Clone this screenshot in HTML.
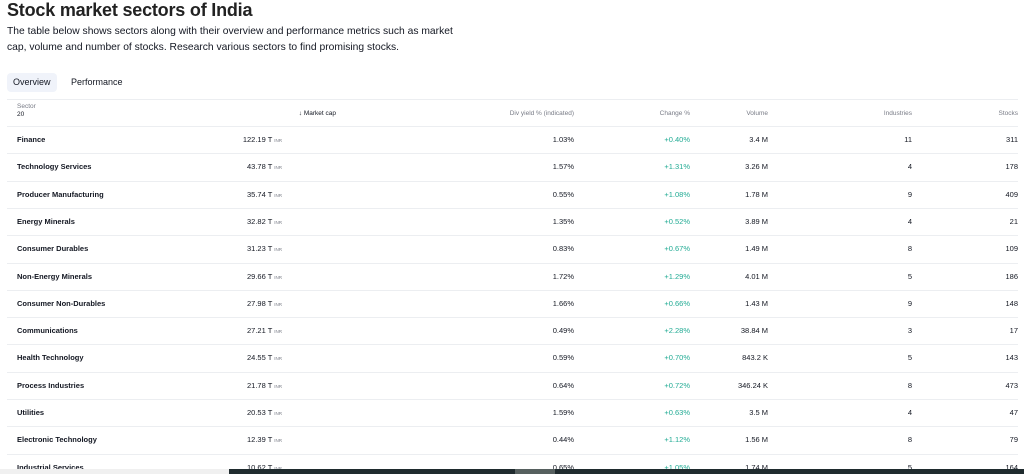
<!DOCTYPE html>
<html><head><style>
body{margin:0;width:1024px;height:474px;overflow:hidden;background:#fff;font-family:"Liberation Sans",sans-serif;color:#131722;position:relative}
h1{position:absolute;left:7px;top:1px;margin:0;font-size:18px;line-height:18px;font-weight:bold;letter-spacing:-0.2px;color:#222}
.d{position:absolute;left:7px;top:24px;font-size:10.3px;line-height:15.5px;width:450px}
.tab{position:absolute;top:73px;height:19px;line-height:19px;font-size:9px;padding:0 6px;border-radius:4px}
.hl{position:absolute;left:7px;right:6px;height:1px;background:#eceef1}
.c{position:absolute;font-size:7.5px;white-space:nowrap}
.r{text-align:right}
.h{color:#787b86;font-size:6.5px}
.g{color:#22ab94}
.s{font-size:4.5px;color:#787b86}
</style></head><body>
<h1>Stock market sectors of India</h1>
<div class="d">The table below shows sectors along with their overview and performance metrics such as market cap, volume and number of stocks. Research various sectors to find promising stocks.</div>
<div class="tab" style="left:7px;background:#f0f3fa">Overview</div>
<div class="tab" style="left:65px">Performance</div>
<div class="hl" style="top:99px"></div>
<div class="c h" style="left:17px;top:103px;line-height:8px">Sector<br><span style="color:#131722">20</span></div>
<div class="c h r" style="right:688px;top:110px;color:#131722">↓ Market cap</div>
<div class="c h r" style="right:450px;top:110px">Div yield % (indicated)</div>
<div class="c h r" style="right:334px;top:110px">Change %</div>
<div class="c h r" style="right:256px;top:110px">Volume</div>
<div class="c h r" style="right:112px;top:110px">Industries</div>
<div class="c h r" style="right:6px;top:110px">Stocks</div>
<div id="rows"></div>
<div style="position:absolute;left:0;top:469px;width:229px;height:5px;background:#f0f0f0"></div>
<div style="position:absolute;left:229px;top:469px;width:795px;height:5px;background:#1f2b2e"></div>
<div style="position:absolute;left:515px;top:469px;width:40px;height:5px;background:#56605f"></div>
<script>
var d=[["Finance","122.19","1.03%","+0.40%","3.4 M","11","311"],["Technology Services","43.78","1.57%","+1.31%","3.26 M","4","178"],["Producer Manufacturing","35.74","0.55%","+1.08%","1.78 M","9","409"],["Energy Minerals","32.82","1.35%","+0.52%","3.89 M","4","21"],["Consumer Durables","31.23","0.83%","+0.67%","1.49 M","8","109"],["Non-Energy Minerals","29.66","1.72%","+1.29%","4.01 M","5","186"],["Consumer Non-Durables","27.98","1.66%","+0.66%","1.43 M","9","148"],["Communications","27.21","0.49%","+2.28%","38.84 M","3","17"],["Health Technology","24.55","0.59%","+0.70%","843.2 K","5","143"],["Process Industries","21.78","0.64%","+0.72%","346.24 K","8","473"],["Utilities","20.53","1.59%","+0.63%","3.5 M","4","47"],["Electronic Technology","12.39","0.44%","+1.12%","1.56 M","8","79"],["Industrial Services","10.62","0.65%","+1.05%","1.74 M","5","164"]];
var h="";
d.forEach(function(r,i){var y=126+i*27.3;h+='<div class="hl" style="top:'+y+'px"></div>';var t=y+9;
h+='<div class="c" style="left:17px;top:'+t+'px;font-weight:bold">'+r[0]+'</div>';
h+='<div class="c r" style="right:742px;top:'+t+'px">'+r[1]+' T <span class="s">INR</span></div>';
h+='<div class="c r" style="right:450px;top:'+t+'px">'+r[2]+'</div>';
h+='<div class="c r g" style="right:334px;top:'+t+'px">'+r[3]+'</div>';
h+='<div class="c r" style="right:256px;top:'+t+'px">'+r[4]+'</div>';
h+='<div class="c r" style="right:112px;top:'+t+'px">'+r[5]+'</div>';
h+='<div class="c r" style="right:6px;top:'+t+'px">'+r[6]+'</div>';});
document.getElementById("rows").innerHTML=h;
</script>
</body></html>
